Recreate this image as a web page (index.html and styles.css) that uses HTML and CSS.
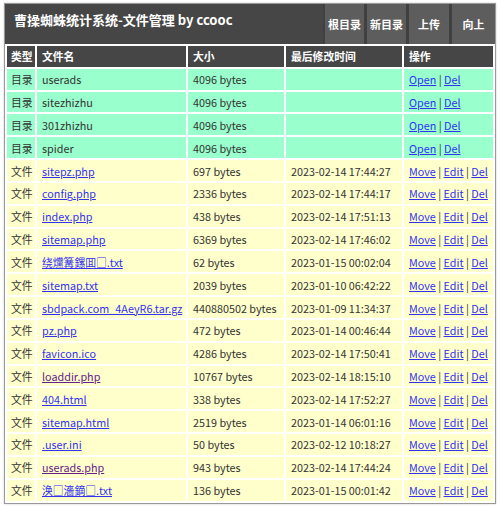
FILE: index.html
```html
<!DOCTYPE html>
<html lang="zh-CN">
  <head>
    <meta charset="UTF-8" />
    <title>曹操蜘蛛统计系统-文件管理</title>
    <link rel="stylesheet" href="styles.css">
  </head>
  <body>
    <div class="wrap">
      <div class="top">
        <h1>曹操蜘蛛统计系统-文件管理 by ccooc</h1>
        <div class="menu">
          <a href="#">根目录</a>
          <a href="#">新目录</a>
          <a href="#">上传</a>
          <a href="#">向上</a>
        </div>
      </div>
      <table class="list">
        <colgroup>
          <col class="c-type">
          <col class="c-name">
          <col class="c-size">
          <col class="c-time">
          <col class="c-act">
        </colgroup>
        <tr class="head">
          <th>类型</th><th>文件名</th><th>大小</th><th>最后修改时间</th><th>操作</th>
        </tr>
        <tr class="dir"><td>目录</td><td>userads</td><td>4096 bytes</td><td></td><td><a href="#">Open</a> | <a href="#">Del</a></td></tr>
        <tr class="dir"><td>目录</td><td>sitezhizhu</td><td>4096 bytes</td><td></td><td><a href="#">Open</a> | <a href="#">Del</a></td></tr>
        <tr class="dir"><td>目录</td><td>301zhizhu</td><td>4096 bytes</td><td></td><td><a href="#">Open</a> | <a href="#">Del</a></td></tr>
        <tr class="dir"><td>目录</td><td>spider</td><td>4096 bytes</td><td></td><td><a href="#">Open</a> | <a href="#">Del</a></td></tr>
        <tr class="file"><td>文件</td><td><a href="#">sitepz.php</a></td><td>697 bytes</td><td>2023-02-14 17:44:27</td><td><a href="#">Move</a> | <a href="#">Edit</a> | <a href="#">Del</a></td></tr>
        <tr class="file"><td>文件</td><td><a href="#">config.php</a></td><td>2336 bytes</td><td>2023-02-14 17:44:17</td><td><a href="#">Move</a> | <a href="#">Edit</a> | <a href="#">Del</a></td></tr>
        <tr class="file"><td>文件</td><td><a href="#">index.php</a></td><td>438 bytes</td><td>2023-02-14 17:51:13</td><td><a href="#">Move</a> | <a href="#">Edit</a> | <a href="#">Del</a></td></tr>
        <tr class="file"><td>文件</td><td><a href="#">sitemap.php</a></td><td>6369 bytes</td><td>2023-02-14 17:46:02</td><td><a href="#">Move</a> | <a href="#">Edit</a> | <a href="#">Del</a></td></tr>
        <tr class="file"><td>文件</td><td><a href="#">绕爣篝鏍囬□.txt</a></td><td>62 bytes</td><td>2023-01-15 00:02:04</td><td><a href="#">Move</a> | <a href="#">Edit</a> | <a href="#">Del</a></td></tr>
        <tr class="file"><td>文件</td><td><a href="#">sitemap.txt</a></td><td>2039 bytes</td><td>2023-01-10 06:42:22</td><td><a href="#">Move</a> | <a href="#">Edit</a> | <a href="#">Del</a></td></tr>
        <tr class="file"><td>文件</td><td><a href="#">sbdpack.com_4AeyR6.tar.gz</a></td><td>440880502 bytes</td><td>2023-01-09 11:34:37</td><td><a href="#">Move</a> | <a href="#">Edit</a> | <a href="#">Del</a></td></tr>
        <tr class="file"><td>文件</td><td><a href="#">pz.php</a></td><td>472 bytes</td><td>2023-01-14 00:46:44</td><td><a href="#">Move</a> | <a href="#">Edit</a> | <a href="#">Del</a></td></tr>
        <tr class="file"><td>文件</td><td><a href="#">favicon.ico</a></td><td>4286 bytes</td><td>2023-02-14 17:50:41</td><td><a href="#">Move</a> | <a href="#">Edit</a> | <a href="#">Del</a></td></tr>
        <tr class="file"><td>文件</td><td><a href="#" class="seen">loaddir.php</a></td><td>10767 bytes</td><td>2023-02-14 18:15:10</td><td><a href="#">Move</a> | <a href="#">Edit</a> | <a href="#">Del</a></td></tr>
        <tr class="file"><td>文件</td><td><a href="#">404.html</a></td><td>338 bytes</td><td>2023-02-14 17:52:27</td><td><a href="#">Move</a> | <a href="#">Edit</a> | <a href="#">Del</a></td></tr>
        <tr class="file"><td>文件</td><td><a href="#">sitemap.html</a></td><td>2519 bytes</td><td>2023-01-14 06:01:16</td><td><a href="#">Move</a> | <a href="#">Edit</a> | <a href="#">Del</a></td></tr>
        <tr class="file"><td>文件</td><td><a href="#">.user.ini</a></td><td>50 bytes</td><td>2023-02-12 10:18:27</td><td><a href="#">Move</a> | <a href="#">Edit</a> | <a href="#">Del</a></td></tr>
        <tr class="file"><td>文件</td><td><a href="#" class="seen">userads.php</a></td><td>943 bytes</td><td>2023-02-14 17:44:24</td><td><a href="#">Move</a> | <a href="#">Edit</a> | <a href="#">Del</a></td></tr>
        <tr class="file"><td>文件</td><td><a href="#">涣□濇鏑□.txt</a></td><td>136 bytes</td><td>2023-01-15 00:01:42</td><td><a href="#">Move</a> | <a href="#">Edit</a> | <a href="#">Del</a></td></tr>
      </table>
    </div>
  </body>
</html>
```

FILE: styles.css
```css
body {
  margin: 0;
  padding: 3px 4px;
  background-color: #fff;
  font-family: 'Noto Sans CJK SC', sans-serif;
  font-size: 10.8px;
  color: #333;
}
.wrap {
  width: 490px;
  border: 1px solid #999;
  background-color: #fff;
  box-shadow: 0 0 2px rgba(0, 0, 0, 0.2);
}
.top {
  display: flex;
  justify-content: space-between;
  height: 40px;
  background-color: #464646;
}
.top h1 {
  margin: 0;
  padding: 6px 0 0 9px;
  font-size: 13px;
  line-height: 20px;
  color: #fff;
}
.menu {
  display: flex;
  gap: 3px;
  background-color: #404040;
  padding-left: 2px;
}
.menu a {
  display: flex;
  align-items: center;
  justify-content: center;
  background-color: #5d5d5d;
  color: #fff;
  font-weight: bold;
  font-size: 11px;
  text-decoration: none;
}
.menu a:nth-child(1) {
  width: 39px;
}
.menu a:nth-child(2) {
  width: 39px;
}
.menu a:nth-child(3) {
  width: 40px;
}
.menu a:nth-child(4) {
  width: 43px;
}
.list {
  width: 100%;
  border-collapse: separate;
  border-spacing: 2px;
  table-layout: fixed;
}
.c-type {
  width: 28px;
}
.c-name {
  width: 149px;
}
.c-size {
  width: 96px;
}
.c-time {
  width: 116px;
}
.list th,
.list td {
  height: 20.84px;
  padding: 0 5px;
  text-align: left;
  white-space: nowrap;
  overflow: hidden;
}
.list th {
  background-color: #464646;
  color: #fff;
}
.dir td {
  background-color: #99ffcc;
}
.file td {
  background-color: #ffffcc;
}
.list td:first-child,
.list th:first-child {
  padding: 0 4px;
}
.list a {
  color: #3333ee;
}
.list a.seen {
  color: #662288;
}
```
